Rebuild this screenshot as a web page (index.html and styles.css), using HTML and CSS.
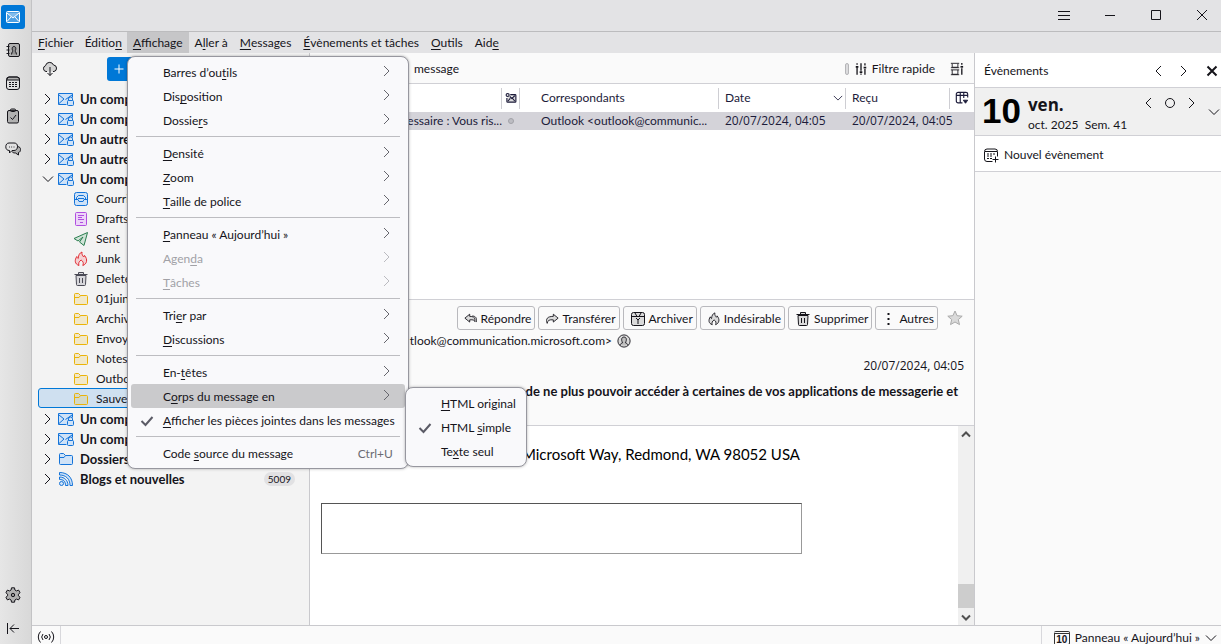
FILE: index.html
```html
<!DOCTYPE html>
<html lang="fr">
<head>
    <meta charset="UTF-8">
    <meta name="viewport" content="width=device-width, initial-scale=1.0">
    <title>Messagerie</title>
    <link rel="stylesheet" href="styles.css">
</head>
<body>

    <!-- Icônes partagées -->
    <svg class="sprite" aria-hidden="true">
        <symbol id="chev-right" viewBox="0 0 12 12"><path d="M3 1 8 6l-5 5"/></symbol>
        <symbol id="chev-left" viewBox="0 0 12 12"><path d="M9 1 4 6l5 5"/></symbol>
        <symbol id="chev-down" viewBox="0 0 12 12"><path d="M1 3.500 6 8.500l5-5"/></symbol>
        <symbol id="check" viewBox="0 0 14 14"><path d="M1.500 7 5.500 11l7-8"/></symbol>
        <symbol id="mail" viewBox="0 0 16 16"><rect x="1.500" y="2.500" width="13" height="11" rx="1"/><path d="M2 4l6 5 6-5M2 12.500l4-4.500M14 12.500 10 8"/></symbol>
        <symbol id="account" viewBox="0 0 16 16"><path d="M8.500 13.500h-8v-11h14v4M1 4l5 4-5 4.500M14 4 7.500 8.500"/><rect x="9.500" y="9.500" width="6" height="5" rx="1"/><path d="M10.500 9.500V8a2 2 0 0 1 4 0v1.500" fill="none"/></symbol>
        <symbol id="book" viewBox="0 0 16 16"><rect x="3.500" y="1.500" width="11" height="13" rx="1.500"/><path d="M1.500 4.500h3M1.500 8h3M1.500 11.500h3M6.500 12.500c.3-2.500 1.200-3 1.500-3.500-1-1-1.500-4.500 1-4.500s2 3.500 1 4.500c.3.500 1.200 1 1.500 3.500"/></symbol>
        <symbol id="calendar" viewBox="0 0 16 16"><rect x="1.500" y="2" width="13" height="12.500" rx="2.500" fill="none"/><path d="M2 5V4.500A2.500 2.500 0 0 1 4 2h8a2.500 2.500 0 0 1 2.500 2.500V5z"/><path d="M4 7.500h2m1 0h2m1 0h2M4 9.500h2m1 0h2m1 0h2M4 11.500h2m1 0h2m1 0h2" fill="none"/></symbol>
        <symbol id="tasks" viewBox="0 0 16 16"><rect x="2.500" y="2.500" width="11" height="12.500" rx="1.500"/><rect x="5.500" y="1" width="5" height="2.500" rx="1"/><path d="m5.500 9.500 2 2 3.500-4.500" fill="none"/></symbol>
        <symbol id="chat" viewBox="0 0 16 16"><path d="M12 5.500c3 .2 3.500 1.500 3.500 3 0 1.700-.7 2.700-2 3v2.500L10.500 12C8.500 12 7.500 11.500 7 10.500"/><path d="M4 2h5c2 0 3.500 1 3.500 3.500s-1.500 4-3.500 4H7L4.500 12V9.500C2 9.500.8 8 .8 5.800S2 2 4 2z" fill="#e2e2e2"/><path d="M4 6h.8m1.500 0h.8m1.500 0h.8"/></symbol>
        <symbol id="gear" viewBox="0 0 16 16"><path d="M6.500.8h3l.4 2.200 1.600.9 2.100-.8 1.500 2.600L13.400 7.200v1.600l1.700 1.500-1.500 2.600-2.100-.8-1.600.9-.4 2.200h-3L6.100 13l-1.600-.9-2.100.8L.9 10.300l1.700-1.500V7.200L.9 5.700l1.500-2.600 2.100.8L6.100 3z"/><circle cx="8" cy="8" r="1.700"/></symbol>
        <symbol id="collapse" viewBox="0 0 16 16"><path d="M2.500 3v11M14 8.500H5M9 4.500l-4 4 4 4" fill="none"/></symbol>
        <symbol id="cloud" viewBox="0 0 16 16"><path d="M5 10.500H4a3 3 0 0 1-.500-5.800A4.200 4.200 0 0 1 11.500 4a3.300 3.300 0 0 1 .5 6.500h-1"/><path d="M8 6v8.500M5.500 12 8 14.500l2.500-2.500" fill="none"/></symbol>
        <symbol id="inbox" viewBox="0 0 16 16"><rect x="1.500" y="1.500" width="13" height="13" rx="2"/><path d="M2 8.500h3l1 2h4l1-2h3M3.500 8V6.500l2-2h5l2 2V8M5 7.500h6"/></symbol>
        <symbol id="drafts" viewBox="0 0 16 16"><rect x="2.500" y="1.500" width="11" height="13" rx="1"/><path d="M5 4.500h6M5 6.500h4M5 8.500h6M7 11.500h3"/></symbol>
        <symbol id="sent" viewBox="0 0 16 16"><path d="M14.500 1.500 1 7.500l4 2.500 5-4-3.500 5 4.500 3.500z"/></symbol>
        <symbol id="flame" viewBox="0 0 16 16"><path d="M6 14.500C1.500 13 1.500 9 3.800 5.500c.4 1.200.7 1.500 1.400 2C5.500 4 6.500 2 9 1c-.5 2.500.7 3.500 1.700 5 .5-.5.700-1 .8-1.600 3.500 4 2.500 8.600-1.700 10.100 1-2.500.5-4-1.700-5.500-2 1.500-3 3.200-2.100 5.500z"/></symbol>
        <symbol id="trash" viewBox="0 0 16 16"><path d="M3 4.500h10l-.5 9a1 1 0 0 1-1 1h-7a1 1 0 0 1-1-1z"/><path d="M1.500 3.500h13M5.500 3V1.500h5V3M6.500 7v5M9.500 7v5"/></symbol>
        <symbol id="folder" viewBox="0 0 16 16"><path d="M1.500 3.500a1 1 0 0 1 1-1h3l2 2h6a1 1 0 0 1 1 1v7a1 1 0 0 1-1 1h-11a1 1 0 0 1-1-1z"/><path d="M2 6.500h4l1.500-2" fill="none"/></symbol>
        <symbol id="rss" viewBox="0 0 16 16"><path d="M1.500 1.500c8 0 13 5 13 13H12C12 8 8 4 1.500 4zM1.500 6c5 0 8.500 3.500 8.500 8.500H7.500c0-4-2-6-6-6z"/><circle cx="3.500" cy="12.500" r="2"/></symbol>
        <symbol id="sliders" viewBox="0 0 16 16"><path d="M3.500 1.500V3M3.500 6v8.500M8 1.500V10M8 13v1.500M12.500 1.500V4M12.500 8v6.500" stroke-width="1.500"/><path d="M2 5.500h3M6.500 11.500h3M11 6.500h3" stroke-width="2"/></symbol>
        <symbol id="display" viewBox="0 0 16 16"><path d="M1 1.500h9.500M2.500 2v4h6.500V2M1 6.500h9.500M1 9h9.500M2.500 9v5H9V9M1 14.500h9.500" fill="none"/><path d="M13.500 1v2M13.500 7v7.500" stroke-width="1.500"/><path d="M12 5.500h3" stroke-width="2"/></symbol>
        <symbol id="unread" viewBox="0 0 16 16"><path d="M7 3.500h6.500a1 1 0 0 1 1 1v8a1 1 0 0 1-1 1h-10a1 1 0 0 1-1-1V8M6.500 6 9 8.500 13 5M4 12l3-3.500M13 12l-3-3.500" stroke-width="1.500"/><circle cx="3.500" cy="4" r="2" stroke-width="1.500"/></symbol>
        <symbol id="columns" viewBox="0 0 16 16"><path d="M8.500 13.500h-5a2 2 0 0 1-2-2v-8a2 2 0 0 1 2-2h9a2 2 0 0 1 2 2v4M1.500 5h13M6 1.500v12M10 1.500V8" fill="none" stroke-width="1.300"/><path d="M9.500 10.500h5L12 14z" fill="currentColor"/></symbol>
        <symbol id="reply" viewBox="0 0 16 16"><path d="M6.500 2.500 1 7l5.500 4.500V9c4-.5 5.500.5 6 2v-3C12.500 6 10 5 6.500 5z"/><path d="M9.500 4.500c4 .3 5.500 2.500 4.500 7" fill="none"/></symbol>
        <symbol id="forward" viewBox="0 0 16 16"><path d="M9.500 2.500 15 7l-5.500 4.500V9C5 8.500 3 9.500 2.500 13 .5 8 2.500 5 9.500 5z"/></symbol>
        <symbol id="archive" viewBox="0 0 16 16"><rect x="1.500" y="1.500" width="13" height="13" rx="2"/><path d="M2 5.500h12M5 2l2 3.500M11 2 9 5.500M6 7l2 2 2-2M8 9v4" fill="none"/></symbol>
        <symbol id="person" viewBox="0 0 16 16"><circle cx="8" cy="8" r="7"/><path d="M3.500 13c.3-2 1.500-2.500 3-3C4.500 7 5 3.500 8 3.500S11.500 7 9.500 10c1.500.5 2.700 1 3 3"/></symbol>
        <symbol id="star" viewBox="0 0 16 16"><path d="m8 1 2.100 4.700 5.100.5-3.900 3.400 1.200 5L8 12l-4.500 2.600 1.200-5L.8 6.200l5.100-.5z"/></symbol>
        <symbol id="new-event" viewBox="0 0 16 16"><path d="M9.500 14.500H4a2.500 2.500 0 0 1-2.500-2.500V4.500A2.500 2.500 0 0 1 4 2h8a2.500 2.500 0 0 1 2.500 2.500v5M2 4.500h12M4 7h2m1 0h2m1 0h2M4 9h2m1 0h2M4 11.500h2m1 0h2M12.500 9.500v6M9.500 12.500h6" fill="none"/></symbol>
        <symbol id="online" viewBox="0 0 18 16"><circle cx="9" cy="8" r="1.500"/><path d="M6 5a4.500 4.500 0 0 0 0 6M12 5a4.500 4.500 0 0 1 0 6M3.500 2.500a8 8 0 0 0 0 11M14.500 2.500a8 8 0 0 1 0 11" fill="none"/></symbol>
    </svg>

    <nav class="spaces">
        <button class="space active" aria-label="Courrier"><svg class="icon"><use href="#mail"/></svg></button>
        <button class="space" aria-label="Carnet d’adresses"><svg class="icon"><use href="#book"/></svg></button>
        <button class="space" aria-label="Agenda"><svg class="icon"><use href="#calendar"/></svg></button>
        <button class="space" aria-label="Tâches"><svg class="icon"><use href="#tasks"/></svg></button>
        <button class="space" aria-label="Messagerie instantanée"><svg class="icon"><use href="#chat"/></svg></button>
        <button class="space bottom" aria-label="Paramètres"><svg class="icon"><use href="#gear"/></svg></button>
        <button class="space" aria-label="Réduire"><svg class="icon"><use href="#collapse"/></svg></button>
    </nav>

    <div class="window">
        <header class="titlebar">
            <button aria-label="Menu"><svg viewBox="0 0 12 12"><path d="M0 1.500h12M0 5.500h12M0 9.500h12"/></svg></button>
            <button aria-label="Réduire la fenêtre"><svg viewBox="0 0 12 12"><path d="M1 5.500h10"/></svg></button>
            <button aria-label="Agrandir"><svg viewBox="0 0 12 12"><path d="M1.500 .5h9v9h-9z"/></svg></button>
            <button aria-label="Fermer"><svg viewBox="0 0 12 12"><path d="m1 0 10 10M11 0 1 10"/></svg></button>
        </header>

        <nav class="menubar">
            <button><u>F</u>ichier</button>
            <button>Éditio<u>n</u></button>
            <div class="menu-holder">
                <button class="open"><u>A</u>ffichage</button>

                <div class="menu main-menu">
                    <button>Barres d’ou<u>t</u>ils<svg class="arrow"><use href="#chev-right"/></svg></button>
                    <button>Dis<u>p</u>osition<svg class="arrow"><use href="#chev-right"/></svg></button>
                    <button>Dossie<u>r</u>s<svg class="arrow"><use href="#chev-right"/></svg></button>
                    <hr>
                    <button><u>D</u>ensité<svg class="arrow"><use href="#chev-right"/></svg></button>
                    <button><u>Z</u>oom<svg class="arrow"><use href="#chev-right"/></svg></button>
                    <button><u>T</u>aille de police<svg class="arrow"><use href="#chev-right"/></svg></button>
                    <hr>
                    <button><u>P</u>anneau « Aujourd’hui »<svg class="arrow"><use href="#chev-right"/></svg></button>
                    <button disabled>Agen<u>d</u>a<svg class="arrow"><use href="#chev-right"/></svg></button>
                    <button disabled><u>T</u>âches<svg class="arrow"><use href="#chev-right"/></svg></button>
                    <hr>
                    <button>Tri<u>e</u>r par<svg class="arrow"><use href="#chev-right"/></svg></button>
                    <button><u>D</u>iscussions<svg class="arrow"><use href="#chev-right"/></svg></button>
                    <hr>
                    <button>En-<u>t</u>êtes<svg class="arrow"><use href="#chev-right"/></svg></button>
                    <button class="hover">C<u>o</u>rps du message en<svg class="arrow"><use href="#chev-right"/></svg></button>
                    <button class="checked"><svg class="tick"><use href="#check"/></svg><u>A</u>fficher les pièces jointes dans les messages</button>
                    <hr>
                    <button>Code <u>s</u>ource du message<kbd>Ctrl+U</kbd></button>
                </div>

                <div class="menu sub-menu">
                    <button><u>H</u>TML original</button>
                    <button class="checked"><svg class="tick"><use href="#check"/></svg>HTML <u>s</u>imple</button>
                    <button>Te<u>x</u>te seul</button>
                </div>
            </div>
            <button>A<u>l</u>ler à</button>
            <button><u>M</u>essages</button>
            <button><u>É</u>vènements et tâches</button>
            <button><u>O</u>utils</button>
            <button>Aid<u>e</u></button>
        </nav>

        <div class="content">
            <aside class="folders">
                <div class="folder-bar">
                    <button class="fetch" aria-label="Relever"><svg class="icon"><use href="#cloud"/></svg></button>
                    <button class="new-message" aria-label="Nouveau message"><svg viewBox="0 0 12 12"><path d="M6 1.500v9M1.500 6h9"/></svg></button>
                </div>
                <ul class="tree">
                    <li class="account"><svg class="twisty"><use href="#chev-right"/></svg><svg class="icon blue"><use href="#account"/></svg>Un comp</li>
                    <li class="account"><svg class="twisty"><use href="#chev-right"/></svg><svg class="icon blue"><use href="#account"/></svg>Un comp</li>
                    <li class="account"><svg class="twisty"><use href="#chev-right"/></svg><svg class="icon blue"><use href="#account"/></svg>Un autre</li>
                    <li class="account"><svg class="twisty"><use href="#chev-right"/></svg><svg class="icon blue"><use href="#account"/></svg>Un autre</li>
                    <li class="account"><svg class="twisty"><use href="#chev-down"/></svg><svg class="icon blue"><use href="#account"/></svg>Un comp</li>
                    <li class="child"><svg class="icon blue"><use href="#inbox"/></svg>Courri</li>
                    <li class="child"><svg class="icon purple"><use href="#drafts"/></svg>Drafts</li>
                    <li class="child"><svg class="icon green"><use href="#sent"/></svg>Sent</li>
                    <li class="child"><svg class="icon red"><use href="#flame"/></svg>Junk</li>
                    <li class="child"><svg class="icon grey"><use href="#trash"/></svg>Delete</li>
                    <li class="child"><svg class="icon yellow"><use href="#folder"/></svg>01juin</li>
                    <li class="child"><svg class="icon yellow"><use href="#folder"/></svg>Archiv</li>
                    <li class="child"><svg class="icon yellow"><use href="#folder"/></svg>Envoy</li>
                    <li class="child"><svg class="icon yellow"><use href="#folder"/></svg>Notes</li>
                    <li class="child"><svg class="icon yellow"><use href="#folder"/></svg>Outbo</li>
                    <li class="child selected"><svg class="icon yellow"><use href="#folder"/></svg>Sauve</li>
                    <li class="account"><svg class="twisty"><use href="#chev-right"/></svg><svg class="icon blue"><use href="#account"/></svg>Un comp</li>
                    <li class="account"><svg class="twisty"><use href="#chev-right"/></svg><svg class="icon blue"><use href="#account"/></svg>Un comp</li>
                    <li class="account"><svg class="twisty"><use href="#chev-right"/></svg><svg class="icon blue"><use href="#folder"/></svg>Dossiers</li>
                    <li class="account"><svg class="twisty"><use href="#chev-right"/></svg><svg class="icon blue"><use href="#rss"/></svg>Blogs et nouvelles<span class="count">5009</span></li>
                </ul>
            </aside>

            <main class="mail">
                <section class="threads">
                    <div class="thread-bar">
                        <span class="thread-count">message</span>
                        <span class="grip"></span>
                        <button><svg class="icon small"><use href="#sliders"/></svg>Filtre rapide</button>
                        <button class="display" aria-label="Affichage"><svg class="icon small"><use href="#display"/></svg></button>
                    </div>
                    <table>
                        <colgroup>
                            <col><col class="c-read"><col class="c-from"><col class="c-date"><col class="c-received"><col class="c-pick">
                        </colgroup>
                        <thead>
                            <tr>
                                <th><span></span></th>
                                <th class="center"><span><svg class="icon tiny"><use href="#unread"/></svg></span></th>
                                <th class="from"><span>Correspondants</span></th>
                                <th><span>Date<svg class="sort"><use href="#chev-down"/></svg></span></th>
                                <th><span>Reçu</span></th>
                                <th class="center"><span><svg class="icon small"><use href="#columns"/></svg></span></th>
                            </tr>
                        </thead>
                        <tbody>
                            <tr>
                                <td class="subject">essaire : Vous ris...</td>
                                <td class="dot-cell"><i class="dot"></i></td>
                                <td class="from">Outlook &lt;outlook@communic...</td>
                                <td class="date">20/07/2024, 04:05</td>
                                <td class="date">20/07/2024, 04:05</td>
                                <td></td>
                            </tr>
                        </tbody>
                    </table>
                </section>

                <section class="message-header">
                    <div class="actions">
                        <button><svg class="icon small"><use href="#reply"/></svg>Répondre</button>
                        <button><svg class="icon small"><use href="#forward"/></svg>Transférer</button>
                        <button><svg class="icon"><use href="#archive"/></svg>Archiver</button>
                        <button><svg class="icon small"><use href="#flame"/></svg>Indésirable</button>
                        <button><svg class="icon"><use href="#trash"/></svg>Supprimer</button>
                        <button><svg class="icon small" viewBox="0 0 14 14"><path d="M6.500 1v2M6.500 6v2M6.500 11v2" stroke-width="2"/></svg>Autres</button>
                        <button class="star" aria-label="Suivre"><svg class="icon"><use href="#star"/></svg></button>
                    </div>
                    <div class="sender">tlook@communication.microsoft.com&gt;<svg class="icon small"><use href="#person"/></svg></div>
                    <time class="date">20/07/2024, 04:05</time>
                    <h1>z de ne plus pouvoir accéder à certaines de vos applications de messagerie et</h1>
                </section>

                <section class="message-body">
                    <div class="mail-text">
                        <p>Microsoft Way, Redmond, WA 98052 USA</p>
                        <div class="frame"></div>
                    </div>
                    <div class="scrollbar">
                        <svg viewBox="0 0 12 12"><path d="M2 8.500 6 4.500l4 4"/></svg>
                        <span class="thumb"></span>
                        <svg viewBox="0 0 12 12"><path d="M2 4.500l4 4 4-4"/></svg>
                    </div>
                </section>
            </main>

            <aside class="today">
                <div class="today-head">
                    <span>Évènements</span>
                    <button aria-label="Précédent"><svg><use href="#chev-left"/></svg></button>
                    <button aria-label="Suivant"><svg><use href="#chev-right"/></svg></button>
                    <button class="close" aria-label="Fermer"><svg viewBox="0 0 12 12"><path d="m1.500 1.500 9 9M10.500 1.500l-9 9"/></svg></button>
                </div>
                <div class="today-date">
                    <strong class="day">10</strong>
                    <div class="date-text">
                        <strong>ven.</strong>
                        <span>oct. 2025&nbsp; Sem. 41</span>
                    </div>
                    <div class="date-nav">
                        <button aria-label="Jour précédent"><svg><use href="#chev-left"/></svg></button>
                        <button aria-label="Aujourd’hui"><svg viewBox="0 0 12 12"><circle cx="6" cy="6" r="4.500"/></svg></button>
                        <button aria-label="Jour suivant"><svg><use href="#chev-right"/></svg></button>
                    </div>
                    <button class="expand" aria-label="Déplier"><svg><use href="#chev-down"/></svg></button>
                </div>
                <button class="new-event"><svg class="icon"><use href="#new-event"/></svg>Nouvel évènement</button>
            </aside>
        </div>

        <footer class="statusbar">
            <button class="online" aria-label="En ligne"><svg><use href="#online"/></svg></button>
            <button class="today-toggle">
                <span class="mini-cal">10</span>
                Panneau « Aujourd’hui »
                <svg><use href="#chev-down"/></svg>
            </button>
        </footer>
    </div>

</body>
</html>
```
FILE: styles.css
```css
* {
    box-sizing: border-box;
}
body {
    margin: 0;
    height: 100vh;
    display: flex;
    overflow: hidden;
    font-family: Lato, "Open Sans", sans-serif;
    font-size: 12px;
    line-height: 18px;
    color: #15141a;
    background-color: #fafafa;
}
button {
    font: inherit;
    color: inherit;
    background: none;
    border: none;
    padding: 0;
    margin: 0;
    display: flex;
    align-items: center;
    white-space: nowrap;
}
u {
    text-underline-offset: 2px;
    text-decoration-thickness: 1px;
}
svg {
    width: 12px;
    height: 12px;
    flex: none;
    fill: none;
    stroke: currentColor;
    overflow: visible;
}
.sprite {
    position: absolute;
    width: 0;
    height: 0;
}
.icon {
    width: 16px;
    height: 16px;
    fill: rgba(90, 90, 90, 0.2);
}
.small {
    width: 14px;
    height: 14px;
}
.tiny {
    width: 12px;
    height: 12px;
}
.blue {
    color: #1373d9;
    fill: #cfe2f7;
}
.purple {
    color: #b14fe0;
    fill: #ecd5f8;
}
.green {
    color: #2a7e4f;
    fill: #cfe3d7;
}
.red {
    color: #e22d34;
    fill: #f5d0d2;
}
.grey {
    color: #4a4a55;
    fill: #d6d6da;
}
.yellow {
    color: #eab308;
    fill: rgba(234, 190, 40, 0.2);
}
.date {
    font-family: "Open Sans", sans-serif;
}

/* Barre des espaces */
.spaces {
    width: 32px;
    flex: none;
    display: flex;
    flex-direction: column;
    padding: 5px 0 4px 1px;
    gap: 9px;
    border-right: 1px solid #c3c3c5;
    background: linear-gradient(to right, #e6e6e6, #d8d8d8);
}
.space {
    width: 24px;
    height: 24px;
    justify-content: center;
    border-radius: 3px;
}
.space.active {
    color: #fff;
    background-color: #0078d7;
}
.space .icon {
    fill: rgba(90, 90, 90, 0.35);
}
.space.active .icon {
    fill: rgba(255, 255, 255, 0.3);
}
.space.bottom {
    margin-top: auto;
}

.window {
    flex: 1;
    min-width: 0;
    display: flex;
    flex-direction: column;
}
.titlebar {
    height: 32px;
    display: flex;
    justify-content: flex-end;
    background-color: #e3e3e5;
    border-bottom: 1px solid #bcbcbe;
}
.titlebar button {
    width: 46px;
    justify-content: center;
}
.titlebar button:last-child {
    width: 42px;
    padding-left: 4px;
}
.menubar {
    height: 21px;
    display: flex;
    background-color: #e3e3e5;
}
.menubar > button {
    height: 21px;
    padding: 0 5px 0 6px;
}
.menu-holder > button,
.menu-holder ~ button {
    height: 21px;
    padding: 0 6px;
}
.menubar .open {
    background-color: #c6c6c8;
}

/* Menus déroulants */
.menu-holder {
    position: relative;
    z-index: 5;
}
.menu {
    position: absolute;
    padding: 3px;
    background-color: #f9f9fb;
    border: 1px solid #97979f;
    border-radius: 8px;
    box-shadow: 0 0 3px rgba(0, 0, 0, 0.3);
}
.main-menu {
    top: 24px;
    left: 0;
    width: 282px;
}
.sub-menu {
    top: 355px;
    left: 278px;
    width: 122px;
}
.menu button {
    width: 100%;
    height: 24px;
    padding: 2px 12px 0 32px;
    border-radius: 3px;
    white-space: pre;
}
.menu .hover {
    background-color: #cacacc;
}
.menu button:disabled {
    color: #a1a1a6;
}
.menu .checked {
    padding-left: 9px;
    padding-right: 0;
}
.menu hr {
    height: 1px;
    margin: 4px 5px;
    border: none;
    background-color: #bdbdc1;
}
.arrow {
    margin-left: auto;
    margin-bottom: 4px;
    color: #66666d;
}
button:disabled .arrow {
    color: #bbbbc0;
}
.tick {
    width: 14px;
    height: 14px;
    margin-right: 9px;
    stroke-width: 2;
    color: #5b5b66;
}
.menu kbd {
    margin-left: auto;
    font: inherit;
    color: #6b6b72;
}

.content {
    flex: 1;
    min-height: 0;
    display: flex;
}

/* Dossiers */
.folders {
    width: 278px;
    flex: none;
    background-color: #f3f3f3;
    border-right: 1px solid #c9c9cd;
}
.folder-bar {
    display: flex;
    align-items: center;
    gap: 49px;
    height: 32px;
    padding-left: 10px;
}
.new-message {
    width: 120px;
    height: 24px;
    padding-left: 6px;
    color: #fff;
    background-color: #0078d7;
    border-radius: 3px;
}
.tree {
    list-style: none;
    margin: 0;
    padding: 3px 6px;
}
.tree li {
    display: flex;
    align-items: center;
    height: 20px;
    padding-top: 2px;
    border: 1px solid transparent;
    border-radius: 3px;
    white-space: nowrap;
}
.tree .account {
    font-size: 13px;
    font-weight: bold;
    padding-left: 3px;
    gap: 6px;
}
.tree .twisty {
    margin-right: -2px;
}
.tree .child {
    padding-left: 34px;
    gap: 7px;
}
.tree .selected {
    background-color: #cfe0f0;
    border-color: #0078d7;
}
.count {
    margin-left: auto;
    margin-right: 7px;
    padding: 0 4px;
    font-size: 10px;
    line-height: 14px;
    font-weight: normal;
    border-radius: 7px;
    background-color: #e1e1e3;
}

/* Liste des messages */
.mail {
    flex: 1;
    min-width: 0;
    display: flex;
    flex-direction: column;
    background-color: #fff;
}
.threads {
    height: 247px;
    border-bottom: 1px solid #d0d0d5;
}
.thread-bar {
    display: flex;
    align-items: center;
    height: 31px;
    padding: 2px 10px 0 104px;
    background-color: #fafafa;
    border-bottom: 1px solid #d0d0d5;
}
.thread-bar button {
    gap: 4px;
}
.thread-count {
    margin-right: auto;
}
.thread-bar .display {
    margin-left: 15px;
}
.grip {
    width: 4px;
    height: 12px;
    margin-right: 5px;
    border: 1px solid #b5b5b8;
    border-radius: 2px;
    background-color: #dcdcde;
}
table {
    width: 100%;
    table-layout: fixed;
    border-collapse: collapse;
    color: #1c1b3a;
}
.c-read {
    width: 18px;
}
.c-from {
    width: 199px;
}
.c-date {
    width: 127px;
}
.c-received {
    width: 104px;
}
.c-pick {
    width: 24px;
}
th {
    height: 28px;
    padding: 0;
    font-weight: normal;
}
th span {
    display: flex;
    align-items: center;
    justify-content: space-between;
    height: 21px;
    padding: 0 2px 0 6px;
    border-right: 1px solid #ceced3;
}
th.center span {
    justify-content: center;
    padding: 0;
}
th:last-child span {
    border: none;
}
th.from span,
td.from {
    padding-left: 21px;
}
.sort {
    width: 10px;
    height: 10px;
}
td {
    height: 18px;
    padding: 0 0 0 6px;
    line-height: 18px;
    background-color: #d4d3d9;
    white-space: nowrap;
}
td.subject {
    padding: 0;
    text-align: right;
}
td.dot-cell {
    padding: 0 6px;
}
.dot {
    display: block;
    width: 6px;
    height: 6px;
    border: 1px solid #a2a2a8;
    border-radius: 50%;
    background-color: #bdbdc3;
}

/* Message */
.message-header {
    height: 126px;
    padding: 6px 10px;
    display: flex;
    flex-direction: column;
    background-color: #fafafa;
    border-bottom: 1px solid #d0d0d5;
}
.actions {
    display: flex;
    justify-content: flex-end;
    gap: 3px;
}
.actions button {
    height: 24px;
    padding: 1px 3px 0 6px;
    gap: 3px;
    border: 1px solid #b9b9bd;
    border-radius: 3px;
}
.actions .star {
    border: none;
    padding: 0 1px 0 6px;
    color: #aaa;
}
.sender {
    display: flex;
    align-items: center;
    justify-content: flex-end;
    gap: 5px;
    width: 311px;
    margin-top: 2px;
    white-space: nowrap;
}
time {
    margin-top: 7px;
    text-align: right;
}
h1 {
    margin: 7px 6px 0 0;
    display: flex;
    justify-content: flex-end;
    font-size: 13px;
    line-height: 18px;
    white-space: nowrap;
}
.message-body {
    flex: 1;
    display: flex;
    min-height: 0;
}
.mail-text {
    flex: 1;
    padding: 18px 11px;
    font-size: 15px;
    line-height: 20px;
    color: #000;
}
.mail-text p {
    margin: 0 0 39px;
    width: 479px;
    white-space: nowrap;
    display: flex;
    justify-content: flex-end;
}
.frame {
    width: 481px;
    height: 51px;
    border: 1px solid #999;
    border-top-color: #555;
    border-left-color: #555;
}
.scrollbar {
    width: 16px;
    display: flex;
    flex-direction: column;
    align-items: center;
    padding: 2px 0;
    background-color: #f0f0f0;
    color: #505050;
    stroke-width: 2;
}
.thumb {
    width: 16px;
    height: 24px;
    margin-top: auto;
    margin-bottom: 3px;
    background-color: #cdcdcd;
}

/* Panneau du jour */
.today {
    width: 247px;
    flex: none;
    background-color: #fafafa;
    border-left: 1px solid #c9c9cd;
}
.today-head {
    display: flex;
    align-items: center;
    gap: 14px;
    height: 35px;
    padding: 1px 3px 0 9px;
    background-color: #fff;
    border-bottom: 1px solid #d0d0d5;
}
.today-head span {
    margin-right: auto;
}
.today-head .close {
    margin-left: 2px;
    stroke-width: 2;
}
.today-date {
    display: flex;
    height: 48px;
    padding-left: 7px;
    background-color: #f0f0f0;
    border-bottom: 1px solid #d0d0d5;
}
.day {
    font-family: "Liberation Sans", Arial, sans-serif;
    font-size: 35px;
    line-height: 46px;
    color: #000;
}
.date-text {
    display: flex;
    flex-direction: column;
    margin-left: 7px;
    padding-top: 6px;
    white-space: nowrap;
}
.date-text strong {
    font-family: "Open Sans", sans-serif;
    font-size: 17px;
    line-height: 22px;
}
.date-nav {
    display: flex;
    gap: 10px;
    height: 30px;
    margin-left: auto;
}
.expand {
    margin-left: 10px;
    margin-right: 1px;
}
.new-event {
    width: 100%;
    height: 36px;
    gap: 5px;
    padding: 2px 0 0 8px;
    background-color: #fff;
    border-bottom: 1px solid #d0d0d5;
}

.statusbar {
    height: 19px;
    display: flex;
    justify-content: space-between;
    background-color: #fafafa;
    border-top: 1px solid #c9c9cd;
}
.online {
    height: 18px;
    width: 29px;
    padding-top: 4px;
    justify-content: center;
    border-right: 1px solid #d8d8dc;
}
.online svg {
    width: 18px;
    height: 16px;
}
.today-toggle {
    height: 18px;
    padding: 5px 4px 0 12px;
    gap: 5px;
    line-height: 14px;
    border-left: 1px solid #d8d8dc;
}
.mini-cal {
    width: 16px;
    height: 14px;
    border: 1px solid #333;
    border-top: 3px double #333;
    border-radius: 2px;
    font: bold 10px/12px "Liberation Sans", sans-serif;
    text-align: center;
}
```
